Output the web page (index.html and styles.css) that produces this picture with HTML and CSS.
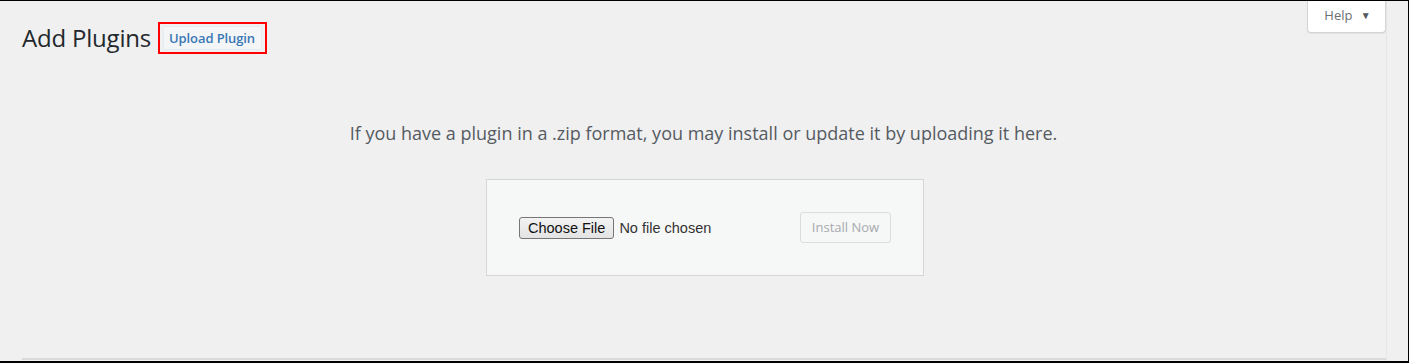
FILE: index.html
```html
<!DOCTYPE html>
<html lang="en">
<head>
<meta charset="utf-8">
<title>Add Plugins</title>
<link rel="stylesheet" href="styles.css">
</head>
<body>
<div class="frame">
  <div class="screen">
    <div class="topbar">
      <div class="title-group">
        <h1 class="page-title">Add Plugins</h1>
        <div class="highlight">
          <a class="upload-btn" href="#">Upload Plugin</a>
        </div>
      </div>
      <button class="help-tab" type="button">Help <span class="caret">&#9660;</span></button>
    </div>
    <p class="install-help">If you have a plugin in a .zip format, you may install or update it by uploading it here.</p>
    <div class="upload-box">
      <div class="file-field">
        <span class="file-btn">Choose File</span>
        <span class="file-name">No file chosen</span>
      </div>
      <span class="install-btn">Install Now</span>
    </div>
    <div class="bottom-line"></div>
  </div>
</div>
</body>
</html>
```
FILE: styles.css
```css
* { box-sizing: border-box; }
html, body { margin: 0; padding: 0; }
body {
  background: #f0f0f0;
  font-family: "Open Sans", "Noto Sans", sans-serif;
}
.frame {
  width: 1409px;
  height: 363px;
  border-top: 1px solid #000;
  border-right: 1px solid #000;
  border-bottom: 2px solid #000;
  background: #f0f0f0;
  overflow: hidden;
}
.screen {
  height: 100%;
  display: flex;
  flex-direction: column;
  border-right: 1px solid #e6e6e6;
  margin-right: 21px;
  position: relative;
}
.topbar {
  display: flex;
  justify-content: space-between;
  align-items: flex-start;
  padding-left: 22px;
}
.title-group {
  display: flex;
  align-items: center;
  gap: 7px;
  padding-top: 21px;
}
.page-title {
  margin: 0;
  font-weight: 400;
  font-size: 24px;
  line-height: 32px;
  color: #23282d;
  letter-spacing: -0.2px;
}
.highlight {
  border: 2px solid #f00;
  padding: 2px 3px;
  display: flex;
}
.upload-btn {
  display: block;
  border: 1px solid #e4ecf3;
  background: #f3f5f6;
  color: #3a78b4;
  text-decoration: none;
  font-weight: 600;
  font-size: 13px;
  line-height: 20px;
  padding: 1px 6px 1px 5px;
  letter-spacing: -0.1px;
}
.help-tab {
  margin-top: -1px;
  width: 79px;
  height: 33px;
  border: 1px solid #d4d4d4;
  border-top: none;
  border-radius: 0 0 4px 4px;
  background: #fff;
  color: #6b6f76;
  font-family: "Open Sans", "Noto Sans", sans-serif;
  font-size: 13px;
  padding: 0 0 2px 2px;
  box-shadow: 0 1px 1px rgba(0,0,0,0.06);
}
.caret {
  font-size: 10px;
  margin-left: 5px;
  color: #50575e;
  vertical-align: 1px;
}
.install-help {
  margin: 67px 0 0 21px;
  text-align: center;
  color: #555b62;
  font-size: 18px;
  line-height: 24px;
}
.upload-box {
  margin: 34px 0 0 486px;
  width: 438px;
  height: 97px;
  border: 1px solid #d6d6d6;
  background: #f6f7f7;
  display: flex;
  align-items: center;
  justify-content: space-between;
  padding: 0 32px 0 32px;
}
.file-field {
  display: flex;
  align-items: center;
  gap: 5px;
}
.file-btn {
  display: block;
  height: 22px;
  padding: 0 8px;
  border: 1px solid #767676;
  border-radius: 3px;
  background: linear-gradient(#f3f3f3, #e3e3e3);
  color: #111;
  font-family: "Liberation Sans", Arial, sans-serif;
  font-size: 14.5px;
  line-height: 20px;
}
.file-name {
  color: #333;
  font-family: "Liberation Sans", Arial, sans-serif;
  font-size: 14.5px;
}
.install-btn {
  display: block;
  width: 91px;
  height: 31px;
  border: 1px solid #dcdcde;
  border-radius: 3px;
  background: #f6f7f7;
  color: #a7aaad;
  font-size: 13px;
  line-height: 29px;
  text-align: center;
}
.bottom-line {
  margin-top: auto;
  margin-left: 22px;
  height: 2px;
  background: #dadada;
  margin-bottom: 1px;
}
```
